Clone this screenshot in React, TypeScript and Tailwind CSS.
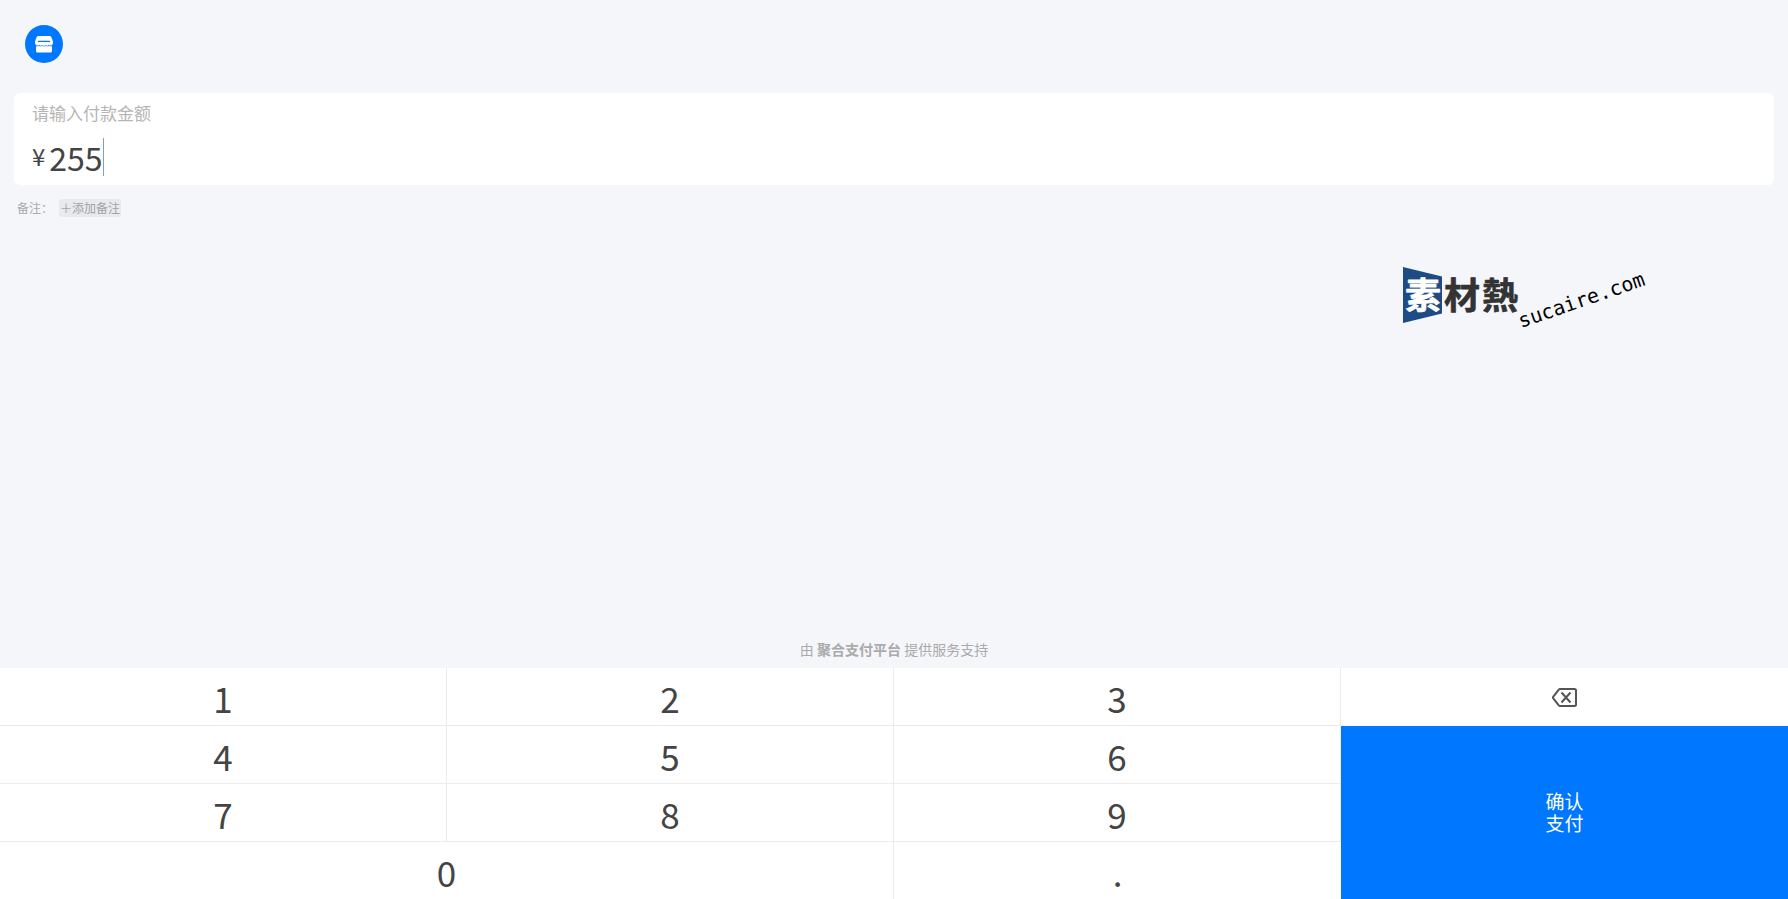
import React from "react";

const keys = ["1", "2", "3", "4", "5", "6", "7", "8", "9"];

// full-width punctuation
const PLUS = "\uFF0B";
const COLON = "\uFF1A";

const StoreIcon = () => (
  <svg width="18" height="17" viewBox="0 0 18 17" aria-hidden="true">
    <path
      d="M3.500 0h11a2 2 0 0 1 1.900 1.300L17.800 5c.5 1.400.2 3-.8 3.900-.9.8-2.200.8-3.100.1-.9.9-2.300.9-3.200.2-1 .8-2.400.8-3.400 0-.9.7-2.300.7-3.200-.2-.9.700-2.200.7-3.100-.1C0 8-.3 6.400.2 5l1.400-3.700A2 2 0 0 1 3.500 0z"
      fill="#fff"
    />
    <path
      d="M1 10.200c1 .3 2.100.2 3.100-.3 1 .6 2.200.6 3.200.1 1 .6 2.400.6 3.400 0 1 .5 2.200.5 3.200-.1 1 .5 2.100.6 3.100.3v4.800a1.500 1.500 0 0 1-1.500 1.500h-13A1.500 1.500 0 0 1 1 15z"
      fill="#fff"
    />
    <path d="M3.500 5.400h11" stroke="#0077ff" strokeWidth="1.100" strokeLinecap="round" />
  </svg>
);

const DeleteIcon = () => (
  <svg width="25" height="19" viewBox="0 0 25 19" fill="none" stroke="#555" aria-hidden="true">
    <path
      d="M8 1h14.500a1.500 1.500 0 0 1 1.500 1.500v14a1.500 1.500 0 0 1-1.500 1.500H8a1.500 1.500 0 0 1-1.200-.6L1.300 10.400a1.500 1.500 0 0 1 0-1.800l5.500-7A1.500 1.500 0 0 1 8 1z"
      strokeWidth="2"
    />
    <path d="M9.500 4.500l9 10M18.500 4.500l-9 10" strokeWidth="2" />
  </svg>
);

const Logo = () => (
  <svg width="250" height="66" viewBox="0 0 250 66" role="img" aria-label="素材熱 sucaire.com">
    <path d="M0 0l39 9.500v37L0 56z" fill="#1d4b85" />
    <g
      fontFamily='"Noto Sans CJK TC", sans-serif'
      fontSize="36"
      fontWeight="700"
      strokeWidth="0.600"
      strokeLinejoin="round"
    >
      <text x="2" y="42" fill="#fff" stroke="#fff">素</text>
      <text x="41" y="42" fill="#333" stroke="#333">材</text>
      <text x="79" y="42" fill="#333" stroke="#333">熱</text>
    </g>
    <text
      transform="translate(118 61) rotate(-19)"
      fontFamily='"DejaVu Sans Mono", monospace'
      fontSize="20"
      fill="#000"
    >
      sucaire.com
    </text>
  </svg>
);

const App = () => {
  const [amount, setAmount] = React.useState("255");
  const press = (key: string) => setAmount((prev) => prev + key);

  return (
    <div className="min-h-screen flex flex-col bg-[#f4f6fa] font-['Noto_Sans_CJK_SC',sans-serif] text-[#444]">
      <header className="px-[25px] pt-[25px] pb-[30px]">
        <div className="size-[38px] rounded-full bg-[#0077ff] flex items-center justify-center">
          <StoreIcon />
        </div>
      </header>

      <main className="flex-1 flex flex-col px-[14px]">
        <section className="bg-white rounded-md h-[92px] px-[18px] pt-2">
          <label htmlFor="amount" className="block text-[17px] leading-6 text-[#b5b5b5]">
            请输入付款金额
          </label>
          <div className="flex items-center h-[38px] mt-[13px]">
            <span className="text-[24px] leading-9 h-[38px] mr-1">¥</span>
            <input
              id="amount"
              value={amount}
              onChange={(e) => setAmount(e.target.value)}
              className="field-sizing-content text-[32px] leading-[38px] h-[38px] outline-none"
            />
            <span className="w-px h-full bg-[#7da0c4]" />
          </div>
        </section>

        <div className="flex items-center mt-[14px] px-[3px] text-[12px] leading-[18px] text-[#aaa]">
          <span className="w-[42px]">备注{COLON}</span>
          <button className="bg-[#e8eaee] rounded-xs px-px text-[#a0a4a8]">{PLUS}添加备注</button>
        </div>

        <div className="self-end mt-[50px] mr-[121px]">
          <Logo />
        </div>
      </main>

      <p className="text-center text-[14px] leading-5 pb-[9px] text-[#aaa]">
        由 <b className="font-bold">聚合支付平台</b> 提供服务支持
      </p>

      <div className="grid grid-cols-4 grid-rows-[58px_58px_58px_57px] bg-white text-[35px] leading-none">
        <div className="col-span-3 row-span-3 grid grid-cols-3 grid-rows-3">
          {keys.map((key) => (
            <button
              key={key}
              onClick={() => press(key)}
              className="border-r border-b border-[#ebebeb] pt-[2px]"
            >
              {key}
            </button>
          ))}
        </div>
        <button
          aria-label="删除"
          onClick={() => setAmount((prev) => prev.slice(0, -1))}
          className="flex items-center justify-center"
        >
          <DeleteIcon />
        </button>
        <button className="row-span-3 bg-[#0077ff] pb-[2px] text-white text-[19px] leading-[22px]">
          <span className="inline-block w-[38px]">确认支付</span>
        </button>
        <button onClick={() => press("0")} className="col-span-2 border-r border-[#ebebeb] pt-[2px]">
          0
        </button>
        <button onClick={() => press(".")} className="pt-[2px]">
          .
        </button>
      </div>
    </div>
  );
};

export default App;
